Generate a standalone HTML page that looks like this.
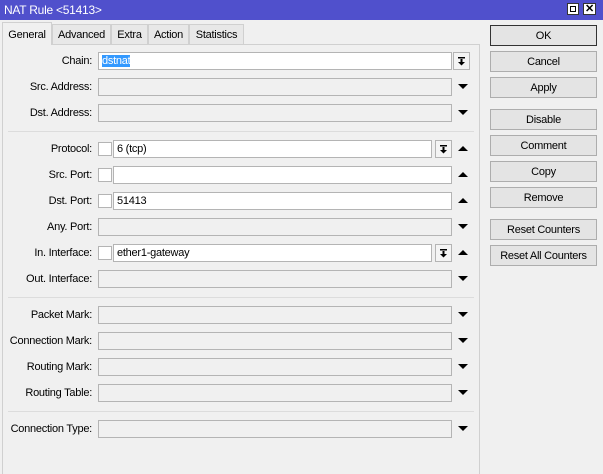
<!DOCTYPE html><html><head><style>
body{margin:0;width:603px;height:466px;overflow:hidden;background:#f0f0f0;font-family:"Liberation Sans",sans-serif;font-size:11px;color:#000;position:relative;letter-spacing:-0.25px}
.a{position:absolute}
.title{left:0;top:0;width:603px;height:20px;background:#5050cc;color:#fff;font-size:12px;line-height:20px}
.lbl{right:511px;text-align:right;white-space:nowrap;line-height:18px}
.f{border:1px solid #b4b4b4;background:#f0f0f0;line-height:17px;padding-left:3px;box-sizing:border-box;height:18px}
.w{background:#fff}
.cb{width:12px;height:12px;border:1px solid #b4b4b4;background:#fff}
.dn{width:0;height:0;border-left:5px solid transparent;border-right:5px solid transparent;border-top:5px solid #000}
.up{width:0;height:0;border-left:5px solid transparent;border-right:5px solid transparent;border-bottom:5px solid #000}
.db{width:17px;height:18px;border:1px solid #b4b4b4;background:#f4f4f4;box-sizing:border-box}
.db svg{position:absolute;left:3px;top:4px}
.btn{left:490px;width:107px;height:21px;border:1px solid #adadad;background:#e4e4e4;box-sizing:border-box;text-align:center;line-height:20px}
.sep{left:8px;width:466px;height:1px;background:#dcdcdc}
.tab{top:24px;height:20px;border:1px solid #d0d0d0;border-bottom:none;background:#e8e8e8;text-align:center;line-height:20px;box-sizing:border-box}
</style></head><body>
<div class="a title"><span style="padding-left:4px">NAT Rule &lt;51413&gt;</span>
<div class="a" style="left:567px;top:3px;width:12px;height:12px;background:#fff;border:1px solid #333;box-sizing:border-box"><div style="margin:2px;width:6px;height:6px;border:1px solid #000;box-sizing:border-box"></div></div>
<div class="a" style="left:583px;top:3px;width:13px;height:12px;background:#fff;border:1px solid #333;box-sizing:border-box;color:#000;font-size:11px;line-height:10px;text-align:center;font-weight:bold">✕</div></div>
<div class="a" style="left:2px;top:44px;width:478px;height:430px;border:1px solid #d0d0d0;box-sizing:border-box;border-bottom:none"></div>
<div class="a tab" style="left:2px;top:22px;width:50px;height:23px;background:#f0f0f0;line-height:24px">General</div>
<div class="a tab" style="left:52px;width:59px">Advanced</div>
<div class="a tab" style="left:111px;width:37px">Extra</div>
<div class="a tab" style="left:148px;width:41px">Action</div>
<div class="a tab" style="left:189px;width:55px">Statistics</div>

<div class="a lbl" style="top:52px">Chain:</div>
<div class="a f w" style="left:98px;top:52px;width:354px"><span style="background:#3399ff;color:#fff">dstnat</span></div>
<div class="a db" style="left:453px;top:52px"><svg width="9" height="9"><rect x="1" y="0" width="7" height="1.5"/><rect x="3.5" y="2" width="2" height="3"/><path d="M1 5h7l-3.5 3.5z"/></svg></div>
<div class="a lbl" style="top:78px">Src. Address:</div><div class="a f" style="left:98px;top:78px;width:354px"></div><div class="a dn" style="left:458px;top:84px"></div>
<div class="a lbl" style="top:104px">Dst. Address:</div><div class="a f" style="left:98px;top:104px;width:354px"></div><div class="a dn" style="left:458px;top:110px"></div>
<div class="a sep" style="top:131px"></div>

<div class="a lbl" style="top:140px">Protocol:</div><div class="a cb" style="left:98px;top:142px"></div><div class="a f w" style="left:113px;top:140px;width:319px">6 (tcp)</div><div class="a db" style="left:435px;top:140px"><svg width="9" height="9"><rect x="1" y="0" width="7" height="1.5"/><rect x="3.5" y="2" width="2" height="3"/><path d="M1 5h7l-3.5 3.5z"/></svg></div><div class="a up" style="left:458px;top:146px"></div>
<div class="a lbl" style="top:166px">Src. Port:</div><div class="a cb" style="left:98px;top:168px"></div><div class="a f w" style="left:113px;top:166px;width:339px"></div><div class="a up" style="left:458px;top:172px"></div>
<div class="a lbl" style="top:192px">Dst. Port:</div><div class="a cb" style="left:98px;top:194px"></div><div class="a f w" style="left:113px;top:192px;width:339px">51413</div><div class="a up" style="left:458px;top:198px"></div>
<div class="a lbl" style="top:218px">Any. Port:</div><div class="a f" style="left:98px;top:218px;width:354px"></div><div class="a dn" style="left:458px;top:224px"></div>
<div class="a lbl" style="top:244px">In. Interface:</div><div class="a cb" style="left:98px;top:246px"></div><div class="a f w" style="left:113px;top:244px;width:319px">ether1-gateway</div><div class="a db" style="left:435px;top:244px"><svg width="9" height="9"><rect x="1" y="0" width="7" height="1.5"/><rect x="3.5" y="2" width="2" height="3"/><path d="M1 5h7l-3.5 3.5z"/></svg></div><div class="a up" style="left:458px;top:250px"></div>
<div class="a lbl" style="top:270px">Out. Interface:</div><div class="a f" style="left:98px;top:270px;width:354px"></div><div class="a dn" style="left:458px;top:276px"></div>
<div class="a sep" style="top:297px"></div>

<div class="a lbl" style="top:306px">Packet Mark:</div><div class="a f" style="left:98px;top:306px;width:354px"></div><div class="a dn" style="left:458px;top:312px"></div>
<div class="a lbl" style="top:332px">Connection Mark:</div><div class="a f" style="left:98px;top:332px;width:354px"></div><div class="a dn" style="left:458px;top:338px"></div>
<div class="a lbl" style="top:358px">Routing Mark:</div><div class="a f" style="left:98px;top:358px;width:354px"></div><div class="a dn" style="left:458px;top:364px"></div>
<div class="a lbl" style="top:384px">Routing Table:</div><div class="a f" style="left:98px;top:384px;width:354px"></div><div class="a dn" style="left:458px;top:390px"></div>
<div class="a sep" style="top:411px"></div>
<div class="a lbl" style="top:420px">Connection Type:</div><div class="a f" style="left:98px;top:420px;width:354px"></div><div class="a dn" style="left:458px;top:426px"></div>

<div class="a btn" style="top:25px;border-color:#333">OK</div>
<div class="a btn" style="top:51px">Cancel</div>
<div class="a btn" style="top:77px">Apply</div>
<div class="a btn" style="top:109px">Disable</div>
<div class="a btn" style="top:135px">Comment</div>
<div class="a btn" style="top:161px">Copy</div>
<div class="a btn" style="top:187px">Remove</div>
<div class="a btn" style="top:219px">Reset Counters</div>
<div class="a btn" style="top:245px">Reset All Counters</div>
</body></html>
